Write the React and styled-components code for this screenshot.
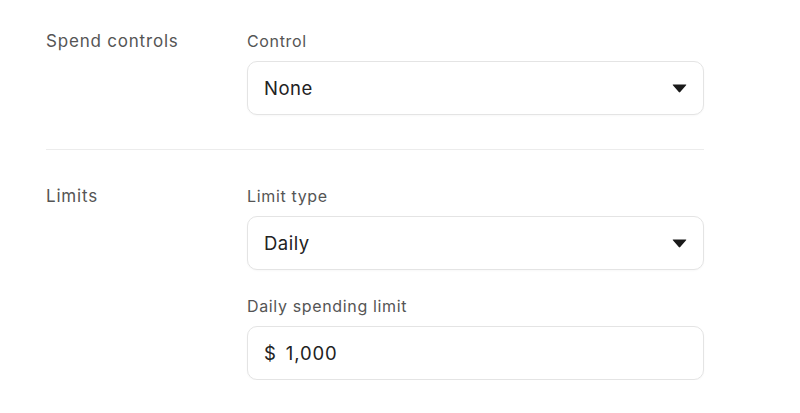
import styled, { createGlobalStyle } from "styled-components";

const GlobalStyle = createGlobalStyle`
  html, body {
    margin: 0;
    padding: 0;
    background: #ffffff;
  }
  body {
    font-family: Inter, "Noto Sans", sans-serif;
    -webkit-font-smoothing: antialiased;
  }
`;

const Page = styled.div`
  width: 658px;
  padding-left: 46px;
`;

const Section = styled.section`
  display: grid;
  grid-template-columns: 201px 1fr;
  padding: ${(p) => (p.$first ? "30px 0 34px" : "35px 0 0")};
  border-bottom: ${(p) => (p.$divider ? "1px solid #ececec" : "none")};
`;

const SectionTitle = styled.h2`
  margin: 0;
  font-size: 17px;
  font-weight: 400;
  line-height: 22px;
  color: #555555;
  letter-spacing: 0.8px;
`;

const Fields = styled.div`
  display: flex;
  flex-direction: column;
  gap: 25px;
`;

const Field = styled.div`
  display: flex;
  flex-direction: column;
  gap: 9px;
`;

const FieldLabel = styled.label`
  font-size: 16px;
  line-height: 22px;
  color: #555555;
  letter-spacing: 0.65px;
`;

const Box = styled.div`
  box-sizing: border-box;
  height: 54px;
  display: flex;
  align-items: center;
  justify-content: space-between;
  padding: 0 16px 0 16px;
  border: 1px solid #e4e4e4;
  border-radius: 10px;
  background: #ffffff;
  box-shadow: 0 1px 2px rgba(0, 0, 0, 0.03);
  font-size: 18.5px;
  letter-spacing: 0.5px;
  color: #222222;
  cursor: ${(p) => (p.$select ? "pointer" : "text")};
`;

const Amount = styled.span`
  display: flex;
  align-items: center;
  gap: 9px;
  letter-spacing: 0.9px;
`;

const Caret = styled.svg`
  width: 15px;
  height: 9px;
  margin-top: 1px;
`;

const Select = ({ value }) => (
  <Box $select>
    <span>{value}</span>
    <Caret viewBox="0 0 15 9">
      <path
        d="M1.2 0.5 H13.8 Q14.8 0.5 14.1 1.3 L8.2 8 Q7.5 8.8 6.8 8 L0.9 1.3 Q0.2 0.5 1.2 0.5 Z"
        fill="#1a1a1a"
      />
    </Caret>
  </Box>
);

export default function App() {
  return (
    <>
      <GlobalStyle />
      <Page>
        <Section $first $divider>
          <SectionTitle>Spend controls</SectionTitle>
          <Fields>
            <Field>
              <FieldLabel>Control</FieldLabel>
              <Select value="None" />
            </Field>
          </Fields>
        </Section>
        <Section>
          <SectionTitle>Limits</SectionTitle>
          <Fields>
            <Field>
              <FieldLabel>Limit type</FieldLabel>
              <Select value="Daily" />
            </Field>
            <Field>
              <FieldLabel>Daily spending limit</FieldLabel>
              <Box>
                <Amount>
                  <span>$</span>
                  <span>1,000</span>
                </Amount>
              </Box>
            </Field>
          </Fields>
        </Section>
      </Page>
    </>
  );
}
